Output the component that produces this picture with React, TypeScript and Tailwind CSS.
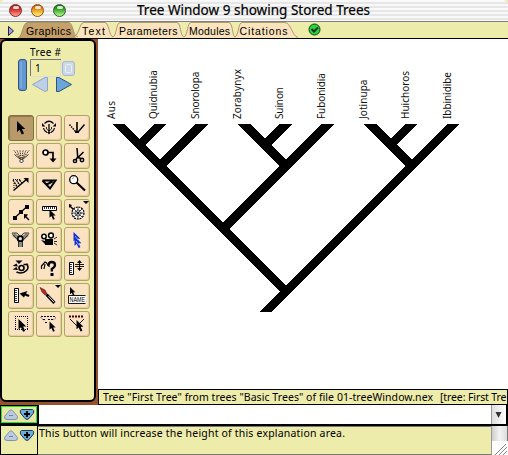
import React from "react";

const ARROW = "M0 0V11L2.6 8.8L4.8 13.5L7 12.5L4.9 8H8.2Z";

function Arrow({ x, y, s = 1, fill = "#000" }: { x: number; y: number; s?: number; fill?: string }) {
  return <path d={ARROW} transform={`translate(${x} ${y}) scale(${s})`} fill={fill} />;
}

const icons: React.ReactNode[] = [
  <Arrow x={9} y={6} />,
  <g fill="none" stroke="#000">
    <path d="M8.500 8.500Q13 4 17.500 8.500M7.500 13Q8 16 11 17.500M18.500 13Q18 16 15 17.500" strokeWidth="1.200" />
    <path d="M13 9v8" strokeWidth="1.300" />
    <path d="M10.500 12v2l2.500 2l2.500-2v-2" strokeWidth=".8" />
    <path d="M6 8v3.500h3.500zM20 8v3.500h-3.500zM11 17h4l-2 2.500z" fill="#000" stroke="none" />
  </g>,
  <g fill="none" stroke="#000">
    <path d="M5.500 9.500l6 7" strokeDasharray="1.500 1" strokeWidth="1.500" />
    <path d="M13 7v10" strokeWidth="1.600" />
    <path d="M20.500 9.500l-6 7" strokeWidth="1.400" />
    <path d="M11 16h4v2h-4z" fill="#000" stroke="none" />
  </g>,
  <g fill="none" stroke="#000">
    <path d="M6 7.500l6.500 8.500M9 7.500l4 9M12 7.500l1.200 9M15 7.500l-1.200 9M18 7.500l-4 9M21 7.500l-6.500 8.500" strokeDasharray="1.200 1" strokeWidth=".9" />
    <path d="M6.500 11.500l6 5M20.500 11.500l-6 5" strokeWidth=".8" />
    <path d="M11.500 18l2-2l2 2l-2 2z" fill="#fff" strokeWidth=".8" />
  </g>,
  <g fill="none" stroke="#000" strokeWidth="1.700">
    <circle cx="9.500" cy="9.500" r="2.500" fill="#fff" />
    <path d="M12 9.500h5V16" />
    <path d="M13.500 15.500h7l-3.500 4z" fill="#000" stroke="none" />
  </g>,
  <g fill="none" stroke="#000" strokeWidth="1.500">
    <path d="M13 5l.7 9l-2 3M19.500 9l-6 6M13.500 14l4 2" />
    <circle cx="11" cy="18" r="1.600" />
    <circle cx="18" cy="17" r="1.700" />
  </g>,
  <g fill="none" stroke="#000">
    <path d="M5.500 19.500L19 8" strokeWidth="1.500" />
    <path d="M15.500 7h5v5z" fill="#000" stroke="none" />
    <path d="M5 9l4 6.500M8.500 9l3 5M11.500 9l2.500 3" strokeWidth="1.300" strokeDasharray="2 .7" />
    <path d="M5 8.500h8M6 12v5" strokeDasharray="1 1" />
  </g>,
  <g fill="none" stroke="#000" strokeWidth="2">
    <path d="M6.500 9.500H19.500L14 17.500L6.500 9.500M10.500 13.500l6-3" />
  </g>,
  <g>
    <path d="M12.500 11.500l8.500 8" stroke="#000" strokeWidth="2.200" />
    <circle cx="9.700" cy="8.700" r="4" fill="#fff" stroke="#000" strokeWidth="1.300" />
    <path d="M8 8l2-1.500" stroke="#999" />
  </g>,
  <g>
    <path d="M7 18.500L18.500 8" stroke="#000" strokeWidth="1.200" />
    <path d="M5 17h4v4H5zM11 11h4v4h-4zM17 6h4v4h-4z" />
    <path d="M16 15v5l1.500-1.500l3 3l1-1l-3-3l1.500-2z" />
  </g>,
  <g>
    <path d="M6.500 7.500h14v4h-14z" fill="#fff" stroke="#000" />
    <path d="M8.500 8v2M10.500 8v2M12.500 8v2M14.500 8v2M16.500 8v2M18.500 8v2" stroke="#000" strokeWidth=".8" />
    <Arrow x={13.500} y={10.500} s={0.75} />
  </g>,
  <g fill="none" stroke="#000">
    <circle cx="14" cy="14" r="6" fill="#fff" strokeWidth="1.200" strokeDasharray="2 .8" />
    <path d="M14 8v12M8 14h12M10 10l8 8M18 10l-8 8" strokeWidth=".7" />
    <circle cx="14" cy="14" r="3" strokeWidth=".9" strokeDasharray="1.500 1" />
    <path d="M5 5v4l1-1l3 3l1-1l-3-3l1-1zM19 2h6l-3 3z" fill="#000" stroke="none" />
  </g>,
  <g>
    <path d="M5.500 7.500l5.500 4M19.500 7.500l-5.500 4M12.500 14v6" stroke="#8a8a86" strokeWidth="4" />
    <path d="M4 6h5l3.500 3.500L16 6h5M4 6.500l6.500 7.500v6M21 6.500l-6.500 7.500v6" fill="none" stroke="#222" strokeWidth=".9" />
    <circle cx="12.300" cy="11.700" r="2.500" stroke="#000" strokeWidth="1.700" fill="#ddd" />
  </g>,
  <g fill="none" stroke="#000" strokeWidth="1.500">
    <circle cx="8" cy="9.500" r="2.200" fill="#fff" />
    <circle cx="15" cy="8.500" r="2.400" fill="#fff" />
    <path d="M9 12h8v6H9zM5 13l4 1v3z" fill="#000" stroke="none" />
    <path d="M18 12l3-2M18 14.500h3M18 16l3 2" strokeWidth=".8" />
  </g>,
  <g>
    <Arrow x={9.500} y={5} s={0.85} fill="#1532d8" />
    <Arrow x={10.500} y={9.500} s={0.85} fill="#1532d8" />
    <path d="M11 9l3 4M12 14l3 4" stroke="#90a7ff" />
  </g>,
  <g fill="none" stroke="#000" strokeWidth="1.600">
    <path d="M7.500 5.500h7l-3.500 3.500zM4.500 11l4-2.500l1.500 3zM4.500 14.500l4-2.500l1.500 3z" fill="#000" stroke="none" />
    <circle cx="13.500" cy="13" r="2.500" />
    <path d="M15.500 9.500h4M18.500 8.500q3 4 0 7q-4 4-10 1.500" />
  </g>,
  <g>
    <path d="M5.500 14V11l3.500-4l2 1M8 14l1-5M10.500 8l3 4" fill="none" stroke="#000" strokeWidth="1.200" />
    <path d="M12.500 11V10Q13 7 15.500 7Q19 7 19 10Q19 12 15.800 14v2.500" fill="none" stroke="#000" strokeWidth="2.300" />
    <path d="M14.500 18h3v3h-3z" />
  </g>,
  <g fill="none" stroke="#000">
    <path d="M5.500 7.500h4v12h-4z" fill="#fff" />
    <path d="M6 9.500h2M6 11.500h2M6 13.500h2M6 15.500h2M6 17.500h2" strokeWidth=".8" />
    <path d="M11 9.500h9M11 11.500h9M15.500 6v9" strokeWidth=".9" />
    <path d="M13 8h5l-2.500-3zM13 13h5l-2.500 3z" fill="#000" stroke="none" />
  </g>,
  <g>
    <path d="M6.500 5.500h4v14h-4z" fill="#fff" stroke="#000" />
    <path d="M7 7.500h2M7 9.500h2M7 11.500h2M7 13.500h2M7 15.500h2M7 17.500h2" stroke="#000" strokeWidth=".8" />
    <path d="M11.500 10.500l8-2.500l-1.500 2.500l3.500 1.500l-1 2l-3.500-1.500l-1 2z" />
  </g>,
  <g>
    <path d="M10.500 11.500l8 8.500" stroke="#000" strokeWidth="3" />
    <path d="M12.500 13.200l5.500 6" stroke="#fff" strokeWidth=".9" />
    <path d="M4 4.500l5 2.500l2 4l-2 1l-3-3z" fill="#b52a2a" stroke="#511" strokeWidth=".6" />
    <path d="M19 2h6l-3 3z" />
  </g>,
  <g>
    <Arrow x={6} y={4} s={0.65} />
    <path d="M4.500 12.500h17v8h-17z" fill="#fff" />
    <path d="M4.500 20.500v-8h17M4.500 20.500h17" fill="none" stroke="#000" strokeWidth=".9" />
    <text x="5.600" y="19.200" fontSize="7" fontFamily="Liberation Sans, sans-serif" textLength="15.500" lengthAdjust="spacingAndGlyphs">NAME</text>
  </g>,
  <g>
    <path d="M7 5.500h13M7 18.500h13M7.500 5v14M19.500 5v14" stroke="#000" strokeDasharray="1 1" shapeRendering="crispEdges" />
    <Arrow x={10.500} y={8} s={0.95} />
  </g>,
  <g shapeRendering="auto">
    <path d="M5 5.500h15M7 8.500h3M12 8.500h6M9 11.500h3" stroke="#000" strokeDasharray="2 1" />
    <path d="M5 6.500l3 3M20 6.500l-2 2" stroke="#000" strokeDasharray="1 1" />
    <Arrow x={13.500} y={10.500} s={0.75} />
  </g>,
  <g>
    <path d="M5 5.500h15" stroke="#400" strokeWidth="2" strokeDasharray="2 1" />
    <path d="M6 8l7 7M20 8l-5 5" stroke="#000" fill="none" strokeWidth=".9" />
    <Arrow x={12.500} y={9} s={0.85} />
  </g>,
];

function Tool({ index, icon }: { index: number; icon: React.ReactNode }) {
  return (
    <div
      className={
        index === 0
          ? "h-[26px] w-[26px] rounded-[3px] border border-[#826f48] bg-[#b99b6b] shadow-[inset_1px_1px_1px_#947749]"
          : "h-[26px] w-[26px] rounded-[3px] border border-[#b3a16c] bg-[#fbe3c1] shadow-[inset_-1px_-1px_1px_#e4c99b]"
      }
    >
      <svg className="-m-px block" width="26" height="26" viewBox="0 0 26 26">
        {icon}
      </svg>
    </div>
  );
}

const tabs = [
  { name: "Graphics", x: 26, w: 45 },
  { name: "Text", x: 82, w: 23 },
  { name: "Parameters", x: 119, w: 58.5 },
  { name: "Modules", x: 189, w: 41 },
  { name: "Citations", x: 239.5, w: 48 },
];

function TabStrip() {
  return (
    <svg className="block" width="508" height="16" viewBox="0 0 508 16">
      <path d="M18 16C23 14 23 1 29 1H289C292 1 295 14 298 16Z" fill="#fae3bd" />
      <path d="M18 16C23 14 22 .5 28 .5H69C73 1 73 10 76 16Z" fill="#c5a06a" />
      <path d="M68 .5C73 1 73 12 77 14C80 11 80 1 84 .5" fill="#edecae" />
      <path d="M105 .5C110 1 110 12 113 14C116 11 116 1 120 .5ZM177 .5C182 1 180 12 184 14C187 11 187 1 191 .5ZM229 .5C233 1 232 12 235 14C238 11 238 1 242 .5Z" fill="#edecae" />
      <path
        d="M18 16C23 14 22 .5 28 .5H69C73 1 73 14 78 15M73 15C80 13 79 .5 84 .5H105C109 1 109 14 113 15C117 13 116 1 120 .5H177C181 1 180 14 184 15C188 13 187 1 191 .5H229C233 1 232 14 235 15C239 13 238 1 242 .5H285C291 1 292 14 298 15.500"
        fill="none"
        stroke="#968c58"
        strokeWidth=".8"
      />
      <path d="M8.500 4.500v9l5-4.500z" fill="#9c9cf0" stroke="#223" />
      {tabs.map((t) => (
        <text key={t.name} x={t.x} y="12.500" fontSize="10.500" fontFamily="Liberation Sans, sans-serif" textLength={t.w}>
          {t.name}
        </text>
      ))}
      <circle cx="314.500" cy="7.500" r="5.500" fill="#27d63c" stroke="#143c14" />
      <path d="M311.500 7l2.500 2.500l4-4" fill="none" stroke="#032" strokeWidth="2" />
    </svg>
  );
}

const taxa: [string, number, number][] = [
  ["Aus", 115, 18],
  ["Quidnubia", 157, 49],
  ["Snorolopa", 199, 47.5],
  ["Zorabynyx", 241, 50],
  ["Suinon", 283, 32],
  ["Fubonidia", 325, 46],
  ["Jotinupa", 367, 39.5],
  ["Huichoros", 409, 48],
  ["Ibbinidibe", 451, 47],
];

function TreeDrawing() {
  return (
    <svg className="block" width="410" height="350" viewBox="98 39 410 350">
      <defs>
        <clipPath id="tips">
          <rect x="98" y="124" width="410" height="188" />
        </clipPath>
      </defs>
      <g clipPath="url(#tips)" fill="none" stroke="#000" strokeWidth="9" shapeRendering="crispEdges">
        <path d="M108.500 114L286 291.500M463.500 114L256 321.500" />
        <path d="M170.400 114L139.500 144.900M212.200 114L160.400 165.800M337.900 114L223.200 228.700" />
        <path d="M234.100 114L286 165.900M296 114L265 145M359.800 114L411.700 165.900M421.600 114L390.700 144.900" />
      </g>
      {taxa.map(([name, x, len]) => (
        <text key={name} transform={`translate(${x} 119) rotate(-90)`} fontSize="10" fontFamily="Noto Sans, sans-serif" textLength={len} fill="#111">
          {name}
        </text>
      ))}
    </svg>
  );
}

function Stepper() {
  return (
    <svg className="block" width="32" height="14" viewBox="0 0 32 14">
      <path d="M.5 8.500L5.500 2.500Q7 1 8.500 2.500L13.500 8.500Q14 11.500 11 11.500H3Q0 11.500 .5 8.500Z" fill="#b9cbe0" stroke="#8293ac" />
      <path d="M5 7.500h4" stroke="#71849c" />
      <path d="M17.500 1.500h11Q30.500 2 29.500 5L25 10.500Q23 12.500 21 10.500L16.500 5Q15.500 2 17.500 1.500Z" fill="#6caddc" stroke="#20395a" />
      <path d="M20 6h6M23 3v6" stroke="#000" strokeWidth="1.800" />
    </svg>
  );
}

const lights = [
  "from-[#8d211e] via-[#df3b34] to-[#ff9d91] border-[#7c2b28]",
  "from-[#ad5713] via-[#f1a321] to-[#fff37a] border-[#8a5119]",
  "from-[#20641c] via-[#47b535] to-[#b5f98c] border-[#2c6228]",
];

export default function App() {
  return (
    <div className="flex h-[455px] w-[508px] flex-col overflow-hidden bg-[#edecab] font-['Noto_Sans',sans-serif] text-[11px] text-black">
      <header className="relative flex h-[22px] shrink-0 items-center rounded-t-[5px] border-b border-[#808080] bg-[repeating-linear-gradient(to_bottom,#f8f8f8_0px,#f8f8f8_2px,#e6e6e6_2px,#e6e6e6_4px)] pl-[9px]">
        <div className="flex gap-[9px]">
          {lights.map((c) => (
            <div key={c} className={`h-[13px] w-[13px] rounded-full border bg-linear-to-b ${c}`}>
              <div className="mx-auto mt-px h-[3px] w-[6px] rounded-full bg-white/80" />
            </div>
          ))}
        </div>
        <svg className="absolute left-[137px] top-0" width="235" height="21">
          <text x="0" y="15" fontSize="13.500" fontFamily="Noto Sans, sans-serif" textLength="233" stroke="#000" strokeWidth=".2">
            Tree Window 9 showing Stored Trees
          </text>
        </svg>
      </header>
      <nav className="h-[17px] shrink-0 border-b border-black">
        <TabStrip />
      </nav>

      <main className="flex h-[366px] shrink-0">
        <aside className="h-full w-[98px] bg-[#95522f] pb-[3px]">
          <div className="flex h-full w-[96px] flex-col rounded-[6px] border-2 border-black bg-[#edecab]">
            <svg className="block shrink-0" width="92" height="74" viewBox="2 41 92 74">
              <text x="30" y="56" fontSize="10" fontFamily="Noto Sans, sans-serif" textLength="31">Tree #</text>
              <rect x="18.500" y="59.500" width="8" height="31" rx="2.500" fill="#6297d0" stroke="#31517f" />
              <path d="M21 62v26" stroke="#8bb9e5" />
              <path d="M30.500 76V59.500H61" fill="none" stroke="#777" />
              <path d="M31 76.500H60.500V60" fill="none" stroke="#ddd" />
              <text x="35" y="72" fontSize="10" fontFamily="Noto Sans, sans-serif">1</text>
              <rect x="62.500" y="61.500" width="12" height="14" rx="2.500" fill="#ccd8e6" stroke="#a8b7ce" />
              <rect x="65.500" y="64.500" width="6" height="8" rx="1" fill="none" stroke="#e9f0fa" />
              <path d="M47.500 77.500V90.500L45 91.500L32.500 84.500L45 77.500Z" fill="#bdd0e8" stroke="#91a4c7" strokeLinejoin="round" />
              <path d="M56.500 77.500V91.500H59L71.500 84.500L59 77.500Z" fill="#6aa6d8" stroke="#31517f" strokeLinejoin="round" />
            </svg>
            <div className="ml-[6px] grid w-[82px] grid-cols-3 gap-[2px]">
              {icons.map((icon, i) => (
                <Tool key={i} index={i} icon={icon} />
              ))}
            </div>
          </div>
        </aside>
        <section className="flex h-full w-[410px] flex-col bg-white">
          <TreeDrawing />
          <div className="h-[16px] border border-black bg-[#edecab]">
            <svg className="block" width="408" height="14">
              <text x="4" y="11" fontSize="10.500" fontFamily="Noto Sans, sans-serif" textLength="330">
                Tree "First Tree" from trees "Basic Trees" of file 01-treeWindow.nex
              </text>
              <text x="341" y="11" fontSize="10.500" fontFamily="Noto Sans, sans-serif" textLength="66.500">[tree: First Tre</text>
            </svg>
          </div>
        </section>
      </main>

      <div className="flex h-[20px] shrink-0 border-b border-black bg-white">
        <div className="h-[19px] w-[38px] border-2 border-[#21e51f] bg-[#e6e9a5] pl-[2px] pt-px outline outline-1 -outline-offset-1 outline-black">
          <Stepper />
        </div>
        <div className="flex-1 border-l border-black" />
        <div className="flex w-[17px] items-center justify-center border-r-2 border-l border-r-black border-l-[#999] bg-linear-to-r from-[#dedede] to-white">
          <svg width="8" height="8"><path d="M.5 1h6L3.500 7z" fill="#333" /></svg>
        </div>
      </div>
      <div className="flex flex-1 border-t border-black">
        <div className="w-[38px] border border-t-0 border-black pl-[3px] pt-[3px]">
          <Stepper />
        </div>
        <div className="flex-1 border-t border-b border-[#777]">
          <svg className="block" width="320" height="18">
            <text x="1" y="10" fontSize="10.500" fontFamily="Noto Sans, sans-serif" textLength="306">
              This button will increase the height of this explanation area.
            </text>
          </svg>
        </div>
        <div className="flex w-[17px] flex-col border-l border-[#999]">
          <div className="h-[15px] border-r border-[#777] bg-linear-to-r from-[#cecece] via-[#f4f4f4] to-[#dcdcdc]" />
          <svg className="block flex-1 bg-white" width="16" height="14">
            <path d="M3 14L14 3M7 14L15 6M11 14L15 10" stroke="#888" />
          </svg>
        </div>
      </div>
    </div>
  );
}
